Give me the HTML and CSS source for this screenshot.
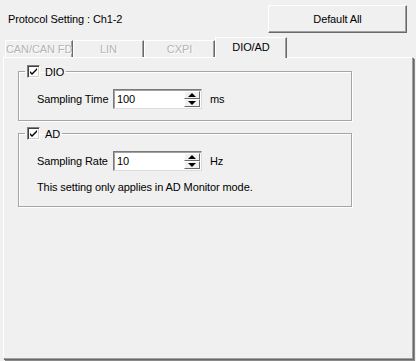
FILE: index.html
```html
<!DOCTYPE html>
<html lang="en">
<head>
    <meta charset="UTF-8">
    <title>Protocol Setting</title>
    <link rel="stylesheet" href="styles.css">
</head>
<body>
    <div class="window">
        <div class="header">
            <span class="title">Protocol Setting : Ch1-2</span>
            <button class="btn">Default All</button>
        </div>

        <div class="tabs">
            <div class="tab disabled">CAN/CAN FD</div>
            <div class="tab disabled">LIN</div>
            <div class="tab disabled">CXPI</div>
            <div class="tab active">DIO/AD</div>
        </div>

        <div class="panel">
            <!-- DIO group -->
            <fieldset class="group">
                <legend><span class="check"><svg width="9" height="9" viewBox="0 0 9 9"><path d="M1 4 L3 6 L8 1 L8 3 L3 8 L1 6 Z" fill="#000"/></svg></span>DIO</legend>
                <div class="row">
                    <label>Sampling Time</label>
                    <div class="spin">
                        <span class="value">100</span>
                        <div class="arrows">
                            <span class="arrow up"></span>
                            <span class="arrow down"></span>
                        </div>
                    </div>
                    <span class="unit">ms</span>
                </div>
            </fieldset>

            <!-- AD group -->
            <fieldset class="group group-ad">
                <legend><span class="check"><svg width="9" height="9" viewBox="0 0 9 9"><path d="M1 4 L3 6 L8 1 L8 3 L3 8 L1 6 Z" fill="#000"/></svg></span>AD</legend>
                <div class="row">
                    <label>Sampling Rate</label>
                    <div class="spin">
                        <span class="value">10</span>
                        <div class="arrows">
                            <span class="arrow up"></span>
                            <span class="arrow down"></span>
                        </div>
                    </div>
                    <span class="unit">Hz</span>
                </div>
                <p class="note">This setting only applies in AD Monitor mode.</p>
            </fieldset>
        </div>
    </div>
</body>
</html>
```

FILE: styles.css
```css
/* General */
body {
    margin: 0;
    background: #f0f0f0;
    font-family: 'Liberation Sans', Arial, sans-serif;
    font-size: 11px;
    letter-spacing: -0.1px;
    color: #000;
}

.window {
    width: 416px;
    height: 361px;
    display: flex;
    flex-direction: column;
}

/* Header */
.header {
    display: flex;
    justify-content: space-between;
    align-items: center;
    height: 28px;
    padding: 5px 9px 0 8px;
}

.btn {
    width: 139px;
    height: 28px;
    font-family: inherit;
    font-size: 11px;
    letter-spacing: inherit;
    background: #f0f0f0;
    border: 1px solid;
    border-color: #fff #696969 #696969 #fff;
    box-shadow: inset -1px -1px 0 #a0a0a0;
    padding: 0;
}

/* Tabs */
.tabs {
    display: flex;
    align-items: flex-end;
    height: 20px;
    margin-top: 4px;
    padding-left: 5px;
}

.tab {
    height: 16px;
    width: 66px;
    text-align: center;
    line-height: 16px;
    border-top: 1px solid #fff;
    border-left: 1px solid #fff;
    border-right: 1px solid #696969;
    box-shadow: inset -1px 0 0 #a0a0a0;
    background: #f0f0f0;
    white-space: nowrap;
    overflow: hidden;
}

.tab:nth-child(2),
.tab:nth-child(3) {
    width: 69px;
}

.tab.disabled {
    color: #b4b4b4;
    text-shadow: 1px 1px 0 #fff;
}

.tab.active {
    width: 70px;
    height: 20px;
    line-height: 18px;
    position: relative;
    z-index: 1;
    margin-bottom: -1px;
}

/* Panel */
.panel {
    flex: 1;
    margin: 0 3px 2px 3px;
    border-top: 1px solid #fff;
    border-left: 1px solid #fff;
    border-right: 1px solid #a0a0a0;
    border-bottom: 1px solid #a0a0a0;
    box-shadow: 1px 1px 0 #696969, 2px 2px 0 #8a8a8a;
    padding: 7px 0 0 14px;
}

/* Group boxes */
.group {
    box-sizing: border-box;
    width: 334px;
    margin: 0;
    padding: 0 0 11px 0;
    border: 1px solid #a5a5a5;
    box-shadow: 1px 1px 0 #fff, inset 1px 1px 0 #fff;
    min-width: 0;
}

.group-ad {
    margin-top: 6px;
    padding-bottom: 13px;
}

.group legend {
    display: flex;
    align-items: center;
    margin-left: 6px;
    padding: 0 2px;
    height: 13px;
}

.check {
    width: 11px;
    height: 11px;
    border: 1px solid;
    border-color: #808080 #fff #fff #808080;
    box-shadow: inset 1px 1px 0 #404040, inset -1px -1px 0 #d4d0c8;
    background: #fff;
    margin-right: 5px;
    display: flex;
    align-items: center;
    justify-content: center;
}

.row {
    display: flex;
    align-items: center;
    margin-top: 11px;
    padding-left: 18px;
}

.row label {
    width: 76px;
    flex-shrink: 0;
    white-space: nowrap;
}

/* Spin box */
.spin {
    width: 87px;
    height: 18px;
    display: flex;
    flex-shrink: 0;
    background: #fff;
    border: 1px solid;
    border-color: #7a7a7a #dcdcdc #dcdcdc #7a7a7a;
    box-shadow: inset 1px 1px 0 #a0a0a0;
}

.spin .value {
    flex: 1;
    padding-left: 3px;
    line-height: 18px;
}

.arrows {
    width: 16px;
    display: flex;
    flex-direction: column;
    padding: 1px 1px 1px 0;
}

.arrow {
    flex: 1;
    background: #f0f0f0;
    border: 1px solid;
    border-color: #fff #696969 #696969 #fff;
    display: flex;
    align-items: center;
    justify-content: center;
}

.arrow.up::after,
.arrow.down::after {
    content: "";
    border-left: 4px solid transparent;
    border-right: 4px solid transparent;
}

.arrow.up::after {
    border-bottom: 4px solid #000;
}

.arrow.down::after {
    border-top: 4px solid #000;
}

.unit {
    margin-left: 8px;
}

.note {
    margin: 10px 0 0 0;
    padding-left: 18px;
    white-space: nowrap;
}
```
